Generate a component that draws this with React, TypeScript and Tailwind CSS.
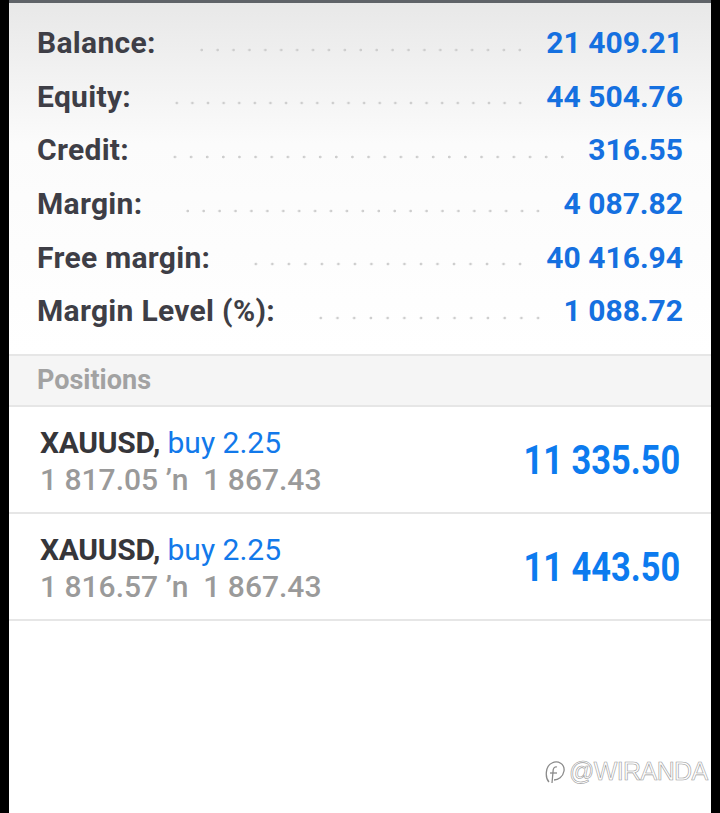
import React from "react";

const summary: [string, string][] = [
  ["Balance:", "21 409.21"],
  ["Equity:", "44 504.76"],
  ["Credit:", "316.55"],
  ["Margin:", "4 087.82"],
  ["Free margin:", "40 416.94"],
  ["Margin Level (%):", "1 088.72"],
];

const positions = [
  { sym: "XAUUSD,", side: "buy 2.25", open: "1 817.05", cur: "1 867.43", profit: "11 335.50" },
  { sym: "XAUUSD,", side: "buy 2.25", open: "1 816.57", cur: "1 867.43", profit: "11 443.50" },
];

export default function App() {
  return (
    <div
      className="w-[720px] h-[813px] bg-black flex relative overflow-hidden"
      style={{ fontFamily: "Roboto, 'Noto Sans', sans-serif" }}
    >
      <div className="ml-[9px] w-[702px] h-full bg-white flex flex-col">
        <div className="h-[3px] bg-[#5f6368]" />
        <div className="bg-gradient-to-b from-[#e8e8e8] via-[#fbfbfb] via-40% to-white pt-[13px] pb-[16px]">
          {summary.map(([label, value]) => (
            <div key={label} className="h-[53.6px] flex items-center pl-[28px] pr-[28px]">
              <span className="text-[30px] font-bold text-[#3e3e46] tracking-[0.3px] whitespace-nowrap">
                {label}
              </span>
              <div className="flex-1 ml-[38px] mr-[18px] mt-[14px] h-[4px] bg-[image:radial-gradient(circle,#cdcdcd_1.1px,transparent_1.7px)] bg-size-[15.6px_4px] bg-repeat-space" />
              <span className="text-[30px] font-bold text-[#1570e0] whitespace-nowrap">{value}</span>
            </div>
          ))}
        </div>
        <div className="border-t-2 border-b-2 border-[#e6e6e6] bg-[#f5f5f5] h-[53px] flex items-center pl-[28px]">
          <span className="text-[27px] font-bold text-[#a2a2a2]">Positions</span>
        </div>
        {positions.map((p, i) => (
          <div
            key={i}
            className="h-[107px] border-b-2 border-[#e6e6e6] flex items-center pl-[31px] pr-[31px]"
          >
            <div className="flex flex-col flex-1 pt-[4px]">
              <div className="text-[30px] leading-[33px] whitespace-nowrap">
                <span className="font-bold text-[#36363a] tracking-[-0.3px]">{p.sym}</span>{" "}
                <span className="text-[#1279ea]">{p.side}</span>
              </div>
              <div className="text-[30px] leading-[33px] mt-[4px] text-[#9a9a9a] font-medium whitespace-nowrap">
                {p.open} ʼn&nbsp;&nbsp;{p.cur}
              </div>
            </div>
            <span className="inline-block origin-right scale-x-[0.86] scale-y-[1.03] mt-[4px] text-[40px] font-bold text-[#0c7bef] whitespace-nowrap">
              {p.profit}
            </span>
          </div>
        ))}
        <div className="flex-1" />
      </div>
      <div
        className="absolute left-[543px] top-[753px] flex items-center gap-[2px] text-[25px] tracking-[-0.6px] text-white font-light whitespace-nowrap"
        style={{ WebkitTextStroke: "0.6px #9a9a9a", fontFamily: "'Liberation Sans', sans-serif" }}
      >
        <svg width="24" height="28" viewBox="0 0 24 28" fill="none" stroke="#8a8a8a" strokeWidth="1.3">
          <path d="M6 24 C2 20 2 8 9 5 C15 2 22 6 21 13 C20 19 15 22 11 22" />
          <path d="M14 9 C11 8 10 11 10 14 L9 25" />
          <path d="M7 15 L14 15" />
        </svg>
        <span>@WIRANDA</span>
      </div>
      <div className="absolute right-0 top-0 w-[9px] h-full bg-black" />
    </div>
  );
}
